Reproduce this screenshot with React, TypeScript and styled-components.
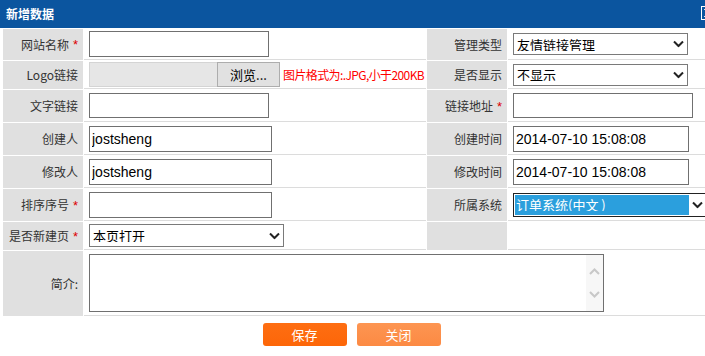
import React from "react";
import styled, { createGlobalStyle, css } from "styled-components";

const GlobalStyle = createGlobalStyle`
  html, body { margin: 0; padding: 0; background: #fff; overflow: hidden; }
  body { font-family: "Liberation Sans", "Noto Sans CJK SC", sans-serif; }
  * { box-sizing: border-box; }
`;

const Page = styled.div`
  width: 705px;
  height: 356px;
  overflow: hidden;
`;

const Header = styled.div`
  height: 28px;
  background: #0b559f;
  display: flex;
  align-items: center;
  padding-left: 6px;
`;

const Title = styled.h1`
  margin: 0;
  font: bold 12px/1 "Noto Sans CJK SC", sans-serif;
  color: #fff;
`;

const CloseIcon = styled.svg`
  margin-left: auto;
  margin-right: -10px;
  margin-top: -3px;
  flex: none;
`;

const Form = styled.div`
  display: grid;
  grid-template-columns: 80px 342px 80px 210px;
  grid-template-rows: 31px 28px 32px 32px 32px 32px 28px 65px;
  gap: 1px;
  padding: 1px 0 0 3px;
`;

const Label = styled.div`
  background: #e0e0e0;
  display: flex;
  align-items: center;
  justify-content: flex-end;
  padding-right: 5px;
  font: 12px/1 "Noto Sans CJK SC", sans-serif;
  color: #333;
  white-space: nowrap;
`;

const Star = styled.span`
  color: #d00;
  margin-left: 4px;
  font: 13px/1 "Liberation Sans", sans-serif;
`;

const Field = styled.div<{ $wide?: boolean }>`
  display: flex;
  align-items: center;
  padding-left: 5px;
  border-bottom: 1px solid #dcdcdc;
  min-width: 0;
  ${(p) =>
    p.$wide &&
    css`
      grid-column: 2 / 5;
    `}
`;

const TextInput = styled.input<{ $w: number; $h?: number }>`
  width: ${(p) => p.$w}px;
  height: ${(p) => p.$h ?? 26}px;
  border: 1px solid #707070;
  padding: 0 2px;
  font: 14px "Liberation Sans", sans-serif;
  color: #000;
  background: #fff;
  outline: none;
  border-radius: 0;
`;

const FileField = styled.div`
  display: flex;
  height: 25px;
  flex: none;
`;

const FilePath = styled.div`
  width: 128px;
  background: #e6e6e6;
  border: 1px solid #d4d4d4;
  border-right: none;
`;

const BrowseButton = styled.button`
  width: 63px;
  height: 100%;
  border: 1px solid #adadad;
  background: #e1e1e1;
  font: 13px/1 "Noto Sans CJK SC", sans-serif;
  color: #000;
  padding: 0;
`;

const Hint = styled.span`
  color: #f00;
  font: 12px/1 "Noto Sans CJK SC", sans-serif;
  letter-spacing: -0.6px;
  margin-left: 3px;
  white-space: nowrap;
`;

const SelectWrap = styled.div<{ $w: number; $h: number }>`
  position: relative;
  width: ${(p) => p.$w}px;
  height: ${(p) => p.$h}px;
  flex: none;
`;

const NativeSelect = styled.select<{ $focused?: boolean }>`
  appearance: none;
  -webkit-appearance: none;
  width: 100%;
  height: 100%;
  border: 1px solid #7a7a7a;
  border-radius: 0;
  background: #fff;
  font: 13px/1 "Noto Sans CJK SC", sans-serif;
  color: #000;
  padding: 0 20px 0 3px;
  outline: none;
  ${(p) =>
    p.$focused &&
    css`
      border-color: #222;
      padding: 1px 19px 1px 1px;
      background: #2b9fdd;
      background-clip: content-box;
      color: #fff;
      text-indent: 1px;
    `}
`;

const Chevron = styled.svg<{ $right: number }>`
  position: absolute;
  right: ${(p) => p.$right}px;
  top: 50%;
  transform: translateY(-50%);
  pointer-events: none;
`;

const MemoBox = styled.div`
  display: flex;
  width: 515px;
  height: 58px;
  border: 1px solid #707070;
  background: #fff;
`;

const Memo = styled.textarea`
  flex: 1;
  border: none;
  resize: none;
  outline: none;
  font: 13px "Liberation Sans", sans-serif;
  padding: 2px;
`;

const ScrollTrack = styled.div`
  width: 17px;
  background: #f7f7f7;
  display: flex;
  flex-direction: column;
  align-items: center;
  justify-content: center;
  gap: 16px;
`;

const Actions = styled.div`
  display: flex;
  justify-content: center;
  gap: 10px;
  padding-top: 7px;
  padding-right: 2px;
`;

const ActionButton = styled.button<{ $primary?: boolean }>`
  width: 84px;
  height: 23px;
  border: none;
  border-radius: 3px;
  color: #fff;
  font: 13px/1 "Noto Sans CJK SC", sans-serif;
  padding: 0;
  background: ${(p) =>
    p.$primary
      ? "linear-gradient(#fe6e12, #fd6608)"
      : "linear-gradient(#fd9552, #fc8a43)"};
`;

function ChevronDown({ right }: { right: number }) {
  return (
    <Chevron $right={right} width="11" height="7" viewBox="0 0 11 7">
      <path d="M1 1 L5.5 5.5 L10 1" fill="none" stroke="#222" strokeWidth="2" />
    </Chevron>
  );
}

function Select({
  w,
  h,
  value,
  focused,
  right = 4,
}: {
  w: number;
  h: number;
  value: string;
  focused?: boolean;
  right?: number;
}) {
  return (
    <SelectWrap $w={w} $h={h}>
      <NativeSelect $focused={focused} defaultValue={value}>
        <option value={value}>{value}</option>
      </NativeSelect>
      <ChevronDown right={right} />
    </SelectWrap>
  );
}

export default function App() {
  return (
    <Page>
      <GlobalStyle />
      <Header>
        <Title>新增数据</Title>
        <CloseIcon width="14" height="14" viewBox="0 0 14 14">
          <rect x="0.5" y="0.5" width="13" height="13" fill="none" stroke="#fff" />
          <path d="M3 3 L11 11 M11 3 L3 11" stroke="#dfe8f3" strokeWidth="1" />
        </CloseIcon>
      </Header>
      <Form>
        <Label>
          网站名称<Star>*</Star>
        </Label>
        <Field>
          <TextInput $w={180} />
        </Field>
        <Label>管理类型</Label>
        <Field>
          <Select w={175} h={22} value="友情链接管理" />
        </Field>

        <Label>Logo链接</Label>
        <Field>
          <FileField>
            <FilePath />
            <BrowseButton>浏览...</BrowseButton>
          </FileField>
          <Hint>图片格式为:.JPG,小于200KB</Hint>
        </Field>
        <Label>是否显示</Label>
        <Field>
          <Select w={175} h={22} value="不显示" />
        </Field>

        <Label>文字链接</Label>
        <Field>
          <TextInput $w={180} $h={25} />
        </Field>
        <Label>
          链接地址<Star>*</Star>
        </Label>
        <Field>
          <TextInput $w={180} $h={25} />
        </Field>

        <Label>创建人</Label>
        <Field>
          <TextInput $w={183} defaultValue="jostsheng" />
        </Field>
        <Label>创建时间</Label>
        <Field>
          <TextInput $w={176} defaultValue="2014-07-10 15:08:08" />
        </Field>

        <Label>修改人</Label>
        <Field>
          <TextInput $w={183} defaultValue="jostsheng" />
        </Field>
        <Label>修改时间</Label>
        <Field>
          <TextInput $w={176} defaultValue="2014-07-10 15:08:08" />
        </Field>

        <Label>
          排序序号<Star>*</Star>
        </Label>
        <Field>
          <TextInput $w={183} />
        </Field>
        <Label>所属系统</Label>
        <Field>
          <Select w={196} h={24} value="订单系统(中文 )" focused right={6} />
        </Field>

        <Label>
          是否新建页<Star>*</Star>
        </Label>
        <Field>
          <Select w={195} h={23} value="本页打开" />
        </Field>
        <Label />
        <Field />

        <Label>简介:</Label>
        <Field $wide>
          <MemoBox>
            <Memo />
            <ScrollTrack>
              <svg width="11" height="7" viewBox="0 0 11 7">
                <path d="M1 6 L5.5 1.5 L10 6" fill="none" stroke="#c8c8c8" strokeWidth="2" />
              </svg>
              <svg width="11" height="7" viewBox="0 0 11 7">
                <path d="M1 1 L5.5 5.5 L10 1" fill="none" stroke="#c8c8c8" strokeWidth="2" />
              </svg>
            </ScrollTrack>
          </MemoBox>
        </Field>
      </Form>
      <Actions>
        <ActionButton $primary>保存</ActionButton>
        <ActionButton>关闭</ActionButton>
      </Actions>
    </Page>
  );
}
